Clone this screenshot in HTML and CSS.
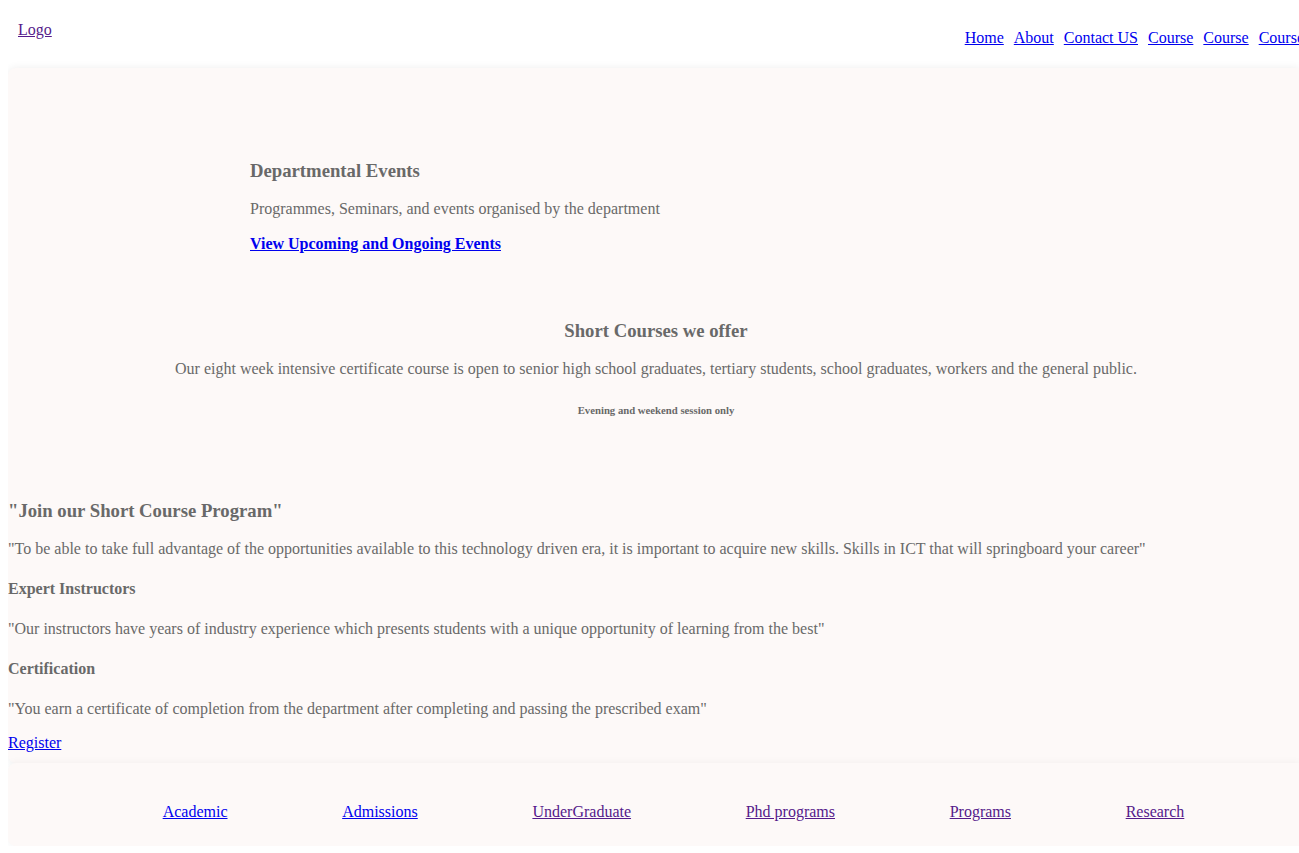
FILE: index.html
```html
<!DOCTYPE html>
<html lang="en">
<head>
<meta charset="utf-8">
<title>Department</title>
<link rel="stylesheet" href="styles.css">
</head>
<body>
<div class="page">
  <header class="header">
    <a class="logo visited" href="#">Logo</a>
    <nav class="nav">
      <a href="#">Home</a>
      <a href="#">About</a>
      <a href="#">Contact US</a>
      <a href="#">Course</a>
      <a href="#">Course</a>
      <a href="#">Course</a>
    </nav>
  </header>

  <main class="card">
    <section class="events">
      <h3>Departmental Events</h3>
      <p>Programmes, Seminars, and events organised by the department</p>
      <p><a class="strong-link" href="#">View Upcoming and Ongoing Events</a></p>
    </section>

    <section class="courses">
      <h3>Short Courses we offer</h3>
      <p>Our eight week intensive certificate course is open to senior high school graduates, tertiary students, school graduates, workers and the general public.</p>
      <h6>Evening and weekend session only</h6>
    </section>

    <section class="join">
      <h3>"Join our Short Course Program"</h3>
      <p>"To be able to take full advantage of the opportunities available to this technology driven era, it is important to acquire new skills. Skills in ICT that will springboard your career"</p>
      <h4>Expert Instructors</h4>
      <p>"Our instructors have years of industry experience which presents students with a unique opportunity of learning from the best"</p>
      <h4>Certification</h4>
      <p>"You earn a certificate of completion from the department after completing and passing the prescribed exam"</p>
      <a href="#">Register</a>
    </section>
  </main>

  <footer class="footer">
    <ul class="footer-links">
      <li><a href="#">Academic</a></li>
      <li><a href="#">Admissions</a></li>
      <li><a class="visited" href="#">UnderGraduate</a></li>
      <li><a class="visited" href="#">Phd programs</a></li>
      <li><a class="visited" href="#">Programs</a></li>
      <li><a class="visited" href="#">Research</a></li>
    </ul>
  </footer>
</div>
</body>
</html>
```

FILE: styles.css
```css
body {
  margin: 8px 0 0 8px;
  background: #ffffff;
  font-family: "Liberation Serif", "Times New Roman", serif;
  font-size: 16px;
  line-height: 1.16;
  color: #696969;
}

a {
  color: #0000ee;
}

a.visited {
  color: #551a8b;
}

.page {
  width: 100%;
}

.header {
  display: flex;
  justify-content: space-between;
  align-items: center;
  height: 60px;
  overflow: hidden;
}

.logo {
  align-self: flex-start;
  padding: 13px 0 0 10px;
}

.nav {
  display: flex;
  flex-shrink: 0;
  gap: 10px;
  margin-right: -5px;
}

.card {
  display: block;
  background: #fdf9f8;
  border-radius: 8px 0 0 8px;
  box-shadow: 0 0 8px rgba(0, 0, 0, 0.07);
  padding-bottom: 10px;
}

.card h3 {
  font-size: 18.72px;
  margin: 18.72px 0;
}

.card h4 {
  font-size: 16px;
  margin: 21.28px 0;
}

.card p {
  margin: 16px 0;
}

.events {
  padding: 73px 0 32px 242px;
}

.strong-link {
  font-weight: bold;
}

.courses {
  text-align: center;
  padding: 0 0 40px 5px;
}

.courses h6 {
  font-size: 10.72px;
  margin: 24.97px 0;
}

.footer {
  background: #fdf9f8;
  border-radius: 8px 0 0 8px;
  box-shadow: 0 0 8px rgba(0, 0, 0, 0.05);
  padding: 24px 0 9px;
}

.footer-links {
  display: flex;
  justify-content: space-evenly;
  list-style: none;
  margin: 16px 0;
  padding: 0 0 0 40px;
}
```
